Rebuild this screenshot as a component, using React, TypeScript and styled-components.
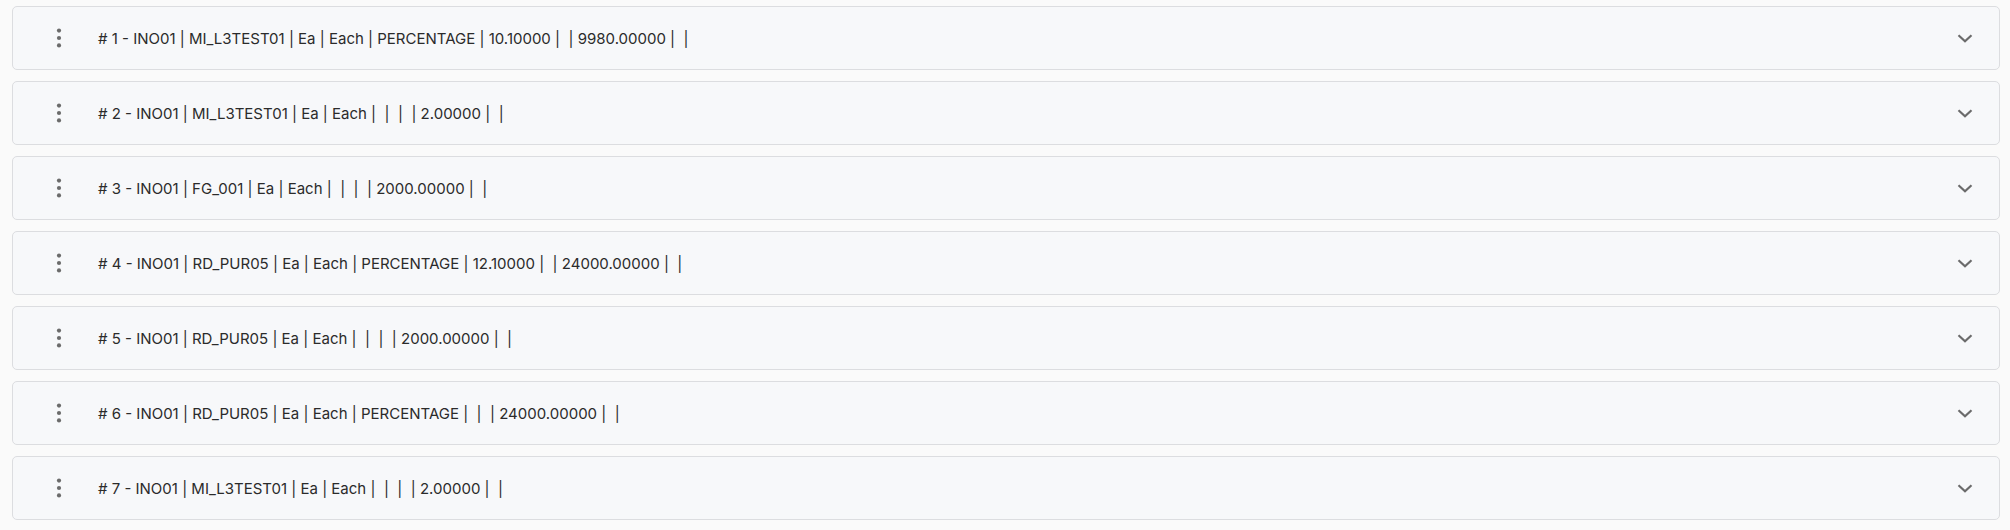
import React from "react";
import styled, { createGlobalStyle } from "styled-components";

const Global = createGlobalStyle`
  html, body { margin: 0; padding: 0; background: #fafafa; }
  body { font-family: Inter, "Noto Sans", sans-serif; }
`;

const List = styled.div`
  display: flex;
  flex-direction: column;
  gap: 11px;
  padding: 6px 10px 0 12px;
`;

const Card = styled.div`
  display: flex;
  align-items: center;
  height: 64px;
  box-sizing: border-box;
  background: #f7f8fa;
  border: 1px solid #dcdde0;
  border-radius: 5px;
  padding: 0 22px 0 33px;
`;

const MenuButton = styled.div`
  display: flex;
  align-items: center;
  justify-content: center;
  width: 26px;
  color: #6b6b6b;
  margin-right: 26px;
`;

const Title = styled.div`
  flex: 1;
  font-size: 15px;
  color: #2b2b2b;
  white-space: pre;
`;

const Chevron = styled.div`
  display: flex;
  color: #6b6b6b;
`;

const rows = [
  "# 1 - INO01 | MI_L3TEST01 | Ea | Each | PERCENTAGE | 10.10000 |  | 9980.00000 |  |",
  "# 2 - INO01 | MI_L3TEST01 | Ea | Each |  |  |  | 2.00000 |  |",
  "# 3 - INO01 | FG_001 | Ea | Each |  |  |  | 2000.00000 |  |",
  "# 4 - INO01 | RD_PUR05 | Ea | Each | PERCENTAGE | 12.10000 |  | 24000.00000 |  |",
  "# 5 - INO01 | RD_PUR05 | Ea | Each |  |  |  | 2000.00000 |  |",
  "# 6 - INO01 | RD_PUR05 | Ea | Each | PERCENTAGE |  |  | 24000.00000 |  |",
  "# 7 - INO01 | MI_L3TEST01 | Ea | Each |  |  |  | 2.00000 |  |",
];

const Dots = () => (
  <svg width="6" height="20" viewBox="0 0 6 20">
    <circle cx="3" cy="2.6" r="2.1" fill="currentColor" />
    <circle cx="3" cy="10" r="2.1" fill="currentColor" />
    <circle cx="3" cy="17.4" r="2.1" fill="currentColor" />
  </svg>
);

const Down = () => (
  <svg width="24" height="24" viewBox="0 0 24 24">
    <path d="M5.5 9.2 12 15.2 18.5 9.2" fill="none" stroke="currentColor" strokeWidth="2.2" />
  </svg>
);

export default function App() {
  return (
    <>
      <Global />
      <List>
        {rows.map((r) => (
          <Card key={r}>
            <MenuButton>
              <Dots />
            </MenuButton>
            <Title>{r}</Title>
            <Chevron>
              <Down />
            </Chevron>
          </Card>
        ))}
      </List>
    </>
  );
}
